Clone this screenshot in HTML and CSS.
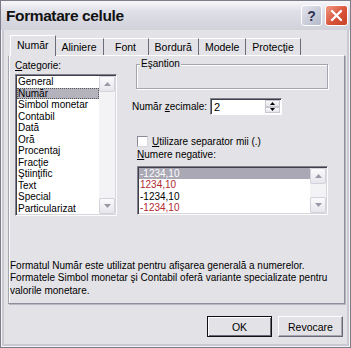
FILE: index.html
```html
<!DOCTYPE html>
<html lang="ro">
<head>
    <meta charset="UTF-8">
    <title>Formatare celule</title>
    <link rel="stylesheet" href="styles.css">
</head>
<body>
    <div class="window">
        <div class="titlebar">
            <h1 class="title">Formatare celule</h1>
            <div class="title-buttons">
                <span class="tbtn help">?</span>
                <span class="tbtn close">
                    <svg width="13" height="13" viewBox="0 0 13 13"><path d="M2 2 L11 11 M11 2 L2 11" stroke="#fff" stroke-width="2.4" stroke-linecap="round"/></svg>
                </span>
            </div>
        </div>

        <div class="content">
            <ul class="tabs">
                <li class="tab active">Număr</li>
                <li class="tab">Aliniere</li>
                <li class="tab">Font</li>
                <li class="tab">Bordură</li>
                <li class="tab">Modele</li>
                <li class="tab">Protecţie</li>
            </ul>

            <div class="panel">
                <div class="cols">
                    <div class="col-left">
                        <div class="label"><u>C</u>ategorie:</div>
                        <div class="listbox cat-list">
                            <ul class="items">
                                <li>General</li>
                                <li class="selected focus">Număr</li>
                                <li>Simbol monetar</li>
                                <li>Contabil</li>
                                <li>Dată</li>
                                <li>Oră</li>
                                <li>Procentaj</li>
                                <li>Fracţie</li>
                                <li>Ştiinţific</li>
                                <li>Text</li>
                                <li>Special</li>
                                <li>Particularizat</li>
                            </ul>
                            <div class="scrollbar">
                                <span class="sbtn"><svg width="7" height="4" viewBox="0 0 7 4"><path d="M0 4 L3.5 0 L7 4 Z" fill="#9a9aa6"/></svg></span>
                                <span class="sbtn"><svg width="7" height="4" viewBox="0 0 7 4"><path d="M0 0 L3.5 4 L7 0 Z" fill="#9a9aa6"/></svg></span>
                            </div>
                        </div>
                    </div>

                    <div class="col-right">
                        <div class="group"><span class="legend">Eşantion</span></div>

                        <div class="decimals">
                            <span class="label">Număr <u>z</u>ecimale:</span>
                            <div class="spin">
                                <span class="spin-value">2</span>
                                <div class="spin-btns">
                                    <span class="spin-btn"><svg width="5" height="3" viewBox="0 0 5 3"><path d="M0 3 L2.5 0 L5 3 Z" fill="#000"/></svg></span>
                                    <span class="spin-btn"><svg width="5" height="3" viewBox="0 0 5 3"><path d="M0 0 L2.5 3 L5 0 Z" fill="#000"/></svg></span>
                                </div>
                            </div>
                        </div>

                        <div class="check-row">
                            <span class="checkbox"></span>
                            <span><u>U</u>tilizare separator mii (.)</span>
                        </div>

                        <div class="label neg-label"><u>N</u>umere negative:</div>
                        <div class="listbox neg-list">
                            <ul class="items">
                                <li class="selected">-1234,10</li>
                                <li class="red">1234,10</li>
                                <li>-1234,10</li>
                                <li class="red">-1234,10</li>
                            </ul>
                            <div class="scrollbar">
                                <span class="sbtn"><svg width="7" height="4" viewBox="0 0 7 4"><path d="M0 4 L3.5 0 L7 4 Z" fill="#9a9aa6"/></svg></span>
                                <span class="sbtn"><svg width="7" height="4" viewBox="0 0 7 4"><path d="M0 0 L3.5 4 L7 0 Z" fill="#9a9aa6"/></svg></span>
                            </div>
                        </div>
                    </div>
                </div>

                <p class="desc">Formatul Număr este utilizat pentru afişarea generală a numerelor.<br>Formatele Simbol monetar şi Contabil oferă variante specializate pentru<br>valorile monetare.</p>
            </div>

            <div class="buttons">
                <button class="btn default">OK</button>
                <button class="btn">Revocare</button>
            </div>
        </div>
    </div>
</body>
</html>
```

FILE: styles.css
```css
body {
    margin: 0;
    font-family: "Liberation Sans", Arial, sans-serif;
    font-size: 10px;
    color: #000;
    background: #e3e2e6;
}

.window {
    width: 351px;
    height: 348px;
    box-sizing: border-box;
    border: 1px solid #7d7d8a;
    background: #e3e2e6;
    display: flex;
    flex-direction: column;
    box-shadow: inset 0 0 0 1px #f4f4f8, inset 0 0 0 3px #c9c9d2;
}

/* title bar */
.titlebar {
    height: 29px;
    flex: none;
    display: flex;
    align-items: center;
    justify-content: space-between;
    padding: 0 2px 0 5px;
    background: linear-gradient(#f7f7fb, #e0e0e8 35%, #d6d6de 75%, #d2d2da);
}

.title {
    margin: 0;
    font: bold 15.5px "Liberation Sans", Arial, sans-serif;
    letter-spacing: -0.4px;
    color: #111;
}

.title-buttons {
    display: flex;
    gap: 3px;
}

.tbtn {
    width: 19px;
    height: 19px;
    border: 1px solid #fff;
    border-radius: 3px;
    display: flex;
    align-items: center;
    justify-content: center;
}

.help {
    background: linear-gradient(135deg, #e4e6ee, #b4b8c8);
    font: bold 14px "Liberation Sans", Arial, sans-serif;
    color: #2d3350;
}

.close {
    width: 21px;
    background: linear-gradient(135deg, #f09a84, #d8533a 55%, #c8412a);
}

/* main area */
.content {
    flex: 1;
    padding: 5px 5px 0 7px;
    display: flex;
    flex-direction: column;
}

.tabs {
    display: flex;
    align-items: flex-end;
    height: 20px;
    margin: 0;
    padding: 0 0 0 3px;
    list-style: none;
    position: relative;
    z-index: 1;
}

.tab {
    height: 17px;
    line-height: 16px;
    box-sizing: border-box;
    padding: 0 6px;
    min-width: 45px;
    text-align: center;
    font-size: 10.5px;
    border-top: 1px solid #fff;
    border-right: 1px solid #6c6c78;
    background: #e3e2e6;
}

.tab.active {
    height: 21px;
    margin-bottom: -1px;
    line-height: 19px;
    border-left: 1px solid #fff;
    margin-left: -1px;
}

.panel {
    height: 249px;
    box-sizing: border-box;
    border: 1px solid #8e8e9a;
    border-top-color: #fff;
    border-left-color: #a6a6b0;
    box-shadow: 1px 1px 0 #b8b8c2, inset 1px 0 0 #fbfbfd;
    display: flex;
    flex-direction: column;
}

.cols {
    display: flex;
    gap: 15px;
    padding: 0 0 0 6px;
}

.col-left {
    width: 102px;
}

.col-right {
    width: 196px;
}

.label {
    line-height: 13px;
}

.col-left .label {
    margin-top: 3px;
    margin-bottom: 2px;
}

/* list boxes */
.listbox {
    display: flex;
    box-sizing: border-box;
    border: 1px solid;
    border-color: #80808e #fcfcfe #fcfcfe #80808e;
    box-shadow: inset 1px 1px 0 #3e3e48, inset -1px -1px 0 #d6d6dc;
    background: #fff;
    padding: 1px;
    overflow: hidden;
}

.items {
    flex: 1;
    margin: 0;
    padding: 0;
    list-style: none;
    overflow: hidden;
}

.items li {
    height: 11.5px;
    line-height: 11.5px;
    padding-left: 1px;
    white-space: nowrap;
}

.items .selected {
    background: #b3b2bd;
}

.items .focus {
    outline: 1px dotted #555;
    outline-offset: -1px;
}

.neg-list .selected {
    color: #fff;
    background: #a9a8b4;
}

.items .red {
    color: #b02a30;
}

.cat-list {
    height: 142px;
}

.neg-list {
    height: 49px;
    margin-left: 5px;
}

.neg-list .items li {
    height: 11.3px;
    line-height: 11.3px;
}

.scrollbar {
    width: 16px;
    flex: none;
    display: flex;
    flex-direction: column;
    justify-content: space-between;
    background: #f3f3f6;
}

.sbtn {
    height: 16px;
    box-sizing: border-box;
    border: 1px solid #d2d2da;
    border-radius: 2px;
    background: linear-gradient(#fbfbfd, #e6e6ec);
    display: flex;
    align-items: center;
    justify-content: center;
}

/* right column */
.group {
    position: relative;
    height: 25px;
    box-sizing: border-box;
    margin: 8px 0 0 4px;
    border: 1px solid #a4a4ae;
    box-shadow: 1px 1px 0 #fff, inset 1px 1px 0 #fff;
}

.legend {
    position: absolute;
    top: -7px;
    left: 3px;
    padding: 0 1px;
    line-height: 12px;
    background: #e3e2e6;
}

.decimals {
    display: flex;
    align-items: center;
    margin-top: 9px;
}

.decimals .label {
    width: 78px;
}

.spin {
    width: 72px;
    height: 17px;
    box-sizing: border-box;
    display: flex;
    border: 1px solid;
    border-color: #80808e #fcfcfe #fcfcfe #80808e;
    box-shadow: inset 1px 1px 0 #3e3e48;
    background: #fff;
    padding: 1px 1px 1px 0;
}

.spin-value {
    flex: 1;
    padding-left: 3px;
    line-height: 14px;
    font-size: 11px;
}

.spin-btns {
    width: 15px;
    display: flex;
    flex-direction: column;
}

.spin-btn {
    flex: 1;
    box-sizing: border-box;
    border: 1px solid #c8c8d0;
    background: linear-gradient(#fbfbfd, #e4e4ea);
    display: flex;
    align-items: center;
    justify-content: center;
}

.check-row {
    display: flex;
    align-items: center;
    gap: 4px;
    height: 13px;
    margin: 20px 0 0 5px;
}

.checkbox {
    width: 11px;
    height: 11px;
    box-sizing: border-box;
    border: 1px solid #8a8a98;
    border-right-color: #d8d8de;
    border-bottom-color: #d8d8de;
    background: #fff;
}

.neg-label {
    margin: 0 0 5px 5px;
}

/* bottom */
.desc {
    margin: auto 0 0;
    padding: 0 0 6px 1px;
    line-height: 12.5px;
}

.buttons {
    display: flex;
    justify-content: flex-end;
    gap: 6px;
    margin-top: 12px;
    padding-right: 2px;
}

.btn {
    width: 65px;
    height: 21px;
    font: 10.5px "Liberation Sans", Arial, sans-serif;
    color: #000;
    background: #e3e2e6;
    border: 1px solid;
    border-color: #fdfdff #6a6a76 #6a6a76 #fdfdff;
    box-shadow: inset -1px -1px 0 #a6a6b0;
    padding: 0;
}

.btn.default {
    border: 1px solid #111;
    box-shadow: inset 1px 1px 0 #fdfdff, inset -1px -1px 0 #6a6a76;
}
```
